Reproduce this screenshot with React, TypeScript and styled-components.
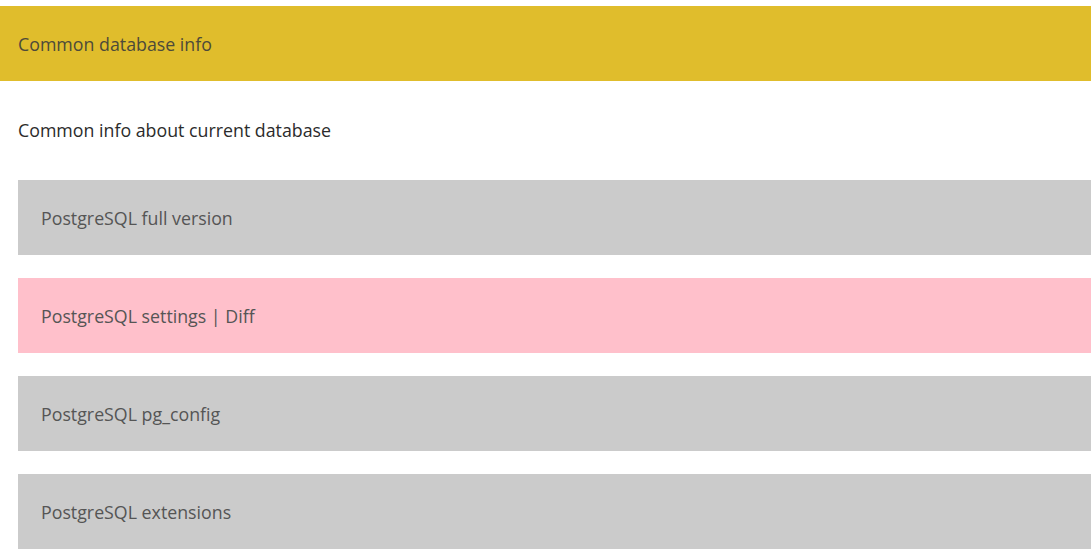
import React from 'react';
import styled, {createGlobalStyle} from 'styled-components';

const GlobalStyle = createGlobalStyle`
    html, body {
        margin: 0;
        padding: 0;
        background: #ffffff;
        overflow: hidden;
    }
    body {
        font-family: "Open Sans", "Noto Sans", sans-serif;
        font-size: 17.8px;
    }
`;

const Page = styled.div`
    padding-top: 6px;
`;

const Header = styled.div`
    display: flex;
    align-items: center;
    height: 75px;
    padding-left: 18px;
    background: #e0bd2c;
    color: #4d4a3a;
`;

const Section = styled.section`
    padding: 37px 0 0 18px;
`;

const Description = styled.p`
    margin: 0;
    line-height: 24px;
    color: #2b2b2b;
`;

const Cards = styled.div`
    display: flex;
    flex-direction: column;
    gap: 23px;
    margin-top: 38px;
`;

const Card = styled.div<{ $diff?: boolean }>`
    display: flex;
    align-items: center;
    height: 75px;
    padding-left: 23px;
    background: ${p => p.$diff ? '#ffc0cb' : '#cbcbcb'};
    color: #555555;
`;

interface item {
    title: string;
    diff?: boolean;
}

const items: item[] = [
    {title: 'PostgreSQL full version'},
    {title: 'PostgreSQL settings | Diff', diff: true},
    {title: 'PostgreSQL pg_config'},
    {title: 'PostgreSQL extensions'},
];

function App() {
    return (
        <Page>
            <GlobalStyle/>
            <Header>Common database info</Header>
            <Section>
                <Description>Common info about current database</Description>
                <Cards>
                    {items.map((e) => (
                        <Card key={e.title} $diff={e.diff}>{e.title}</Card>
                    ))}
                </Cards>
            </Section>
        </Page>
    );
}

export default App;
